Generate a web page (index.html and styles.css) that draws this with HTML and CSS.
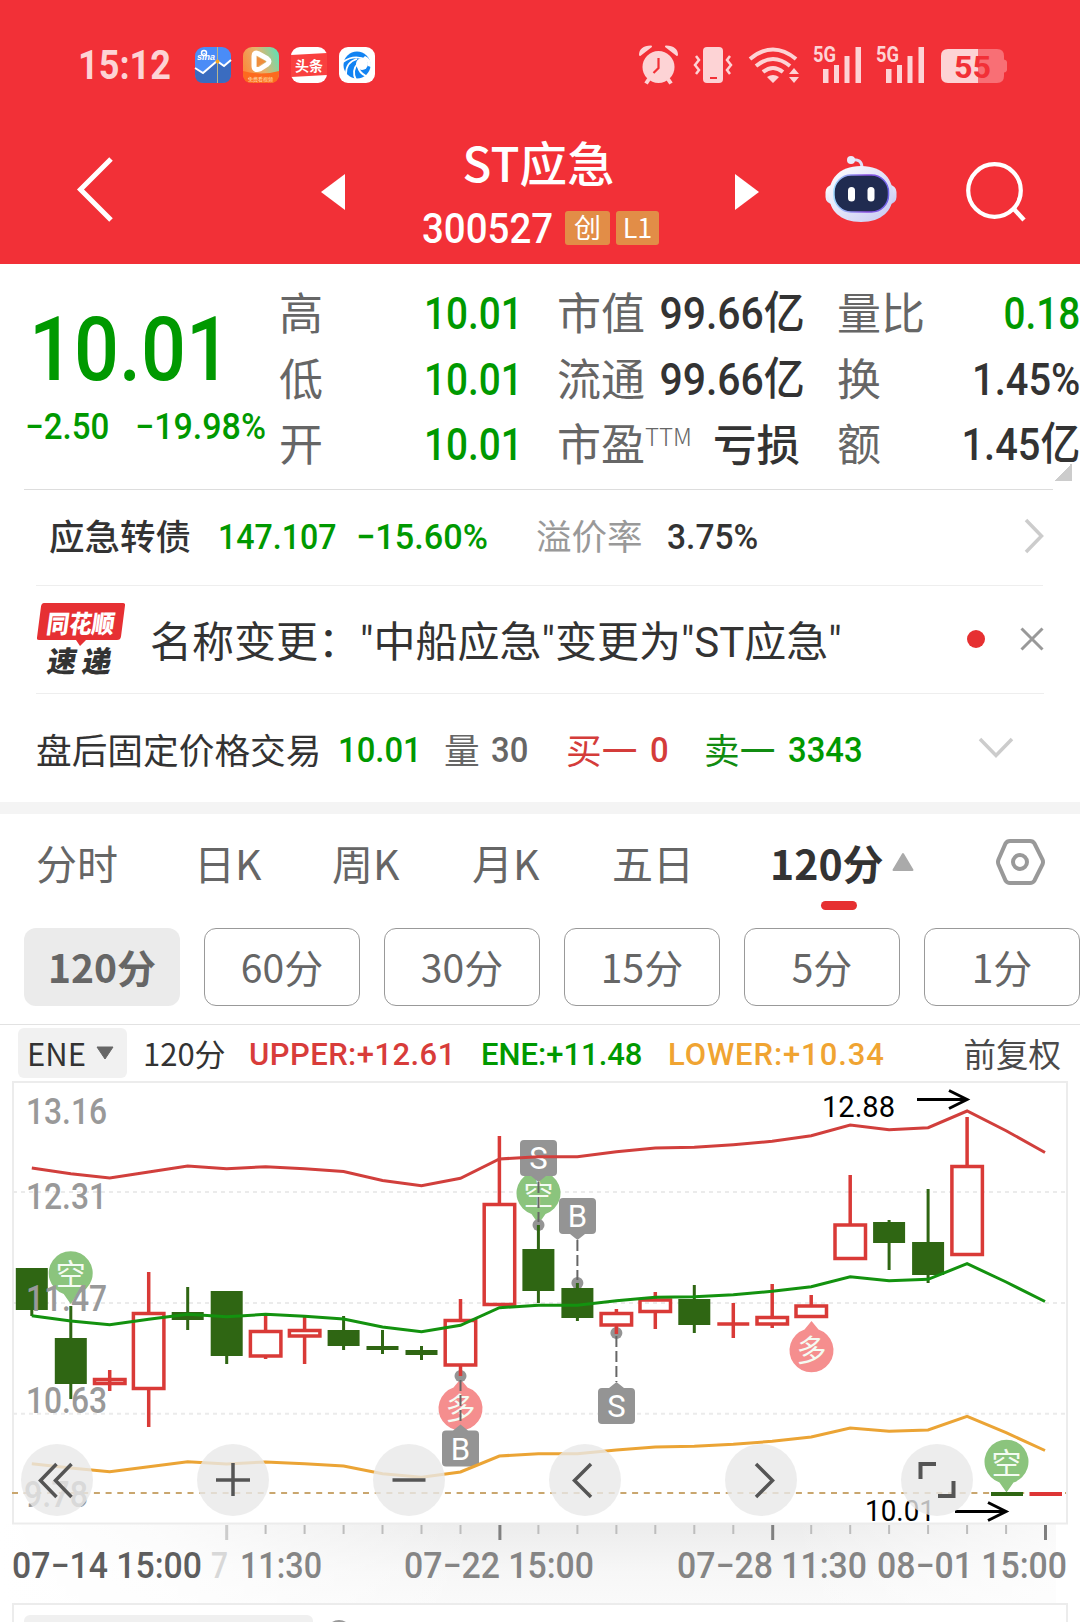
FILE: index.html
```html
<!DOCTYPE html>
<html lang="zh-CN">
<head>
    <meta charset="UTF-8">
    <meta name="viewport" content="width=device-width, initial-scale=1.0">
    <title>ST应急 300527</title>
    <link rel="stylesheet" href="styles.css">
</head>
<body>
    <header class="header">
        <div class="status-bar">
            <span class="clock">15:12</span>
            <div class="app-icons">
                <svg width="36" height="36" viewBox="0 0 36 36">
                    <rect width="36" height="36" rx="9" fill="#4a8cf7"/>
                    <path d="M0 21l8 5 14-12 7 5 7-6v14q0 9-9 9H9q-9 0-9-9z" fill="#3a6cc0"/>
                    <path d="M0 21l8 5 14-12 7 5 7-6" fill="none" stroke="#fff" stroke-width="2"/>
                    <path d="M22.500 0v36" stroke="#b9b58e" stroke-width="1"/>
                    <circle cx="22.500" cy="14.500" r="2" fill="#f5a623"/>
                    <circle cx="9" cy="6" r="2.500" fill="none" stroke="#fff" stroke-width="1.500"/>
                    <text x="2" y="13" class="sina">sina</text>
                </svg>
                <svg width="36" height="36" viewBox="0 0 36 36">
                    <defs>
                        <linearGradient id="video" x1="0" y1="0.600" x2="1" y2="0.200">
                            <stop offset="0" stop-color="#fb8a3c"/>
                            <stop offset="0.500" stop-color="#e6b26c"/>
                            <stop offset="1" stop-color="#62e0b4"/>
                        </linearGradient>
                    </defs>
                    <rect width="36" height="36" rx="9" fill="url(#video)"/>
                    <path d="M0 24q18 5 36 0v3q0 9-9 9H9q-9 0-9-9z" fill="#fd6a1f"/>
                    <path d="M11 9q0-4 4-2.500l9 5q4 3 0 6l-7 4.500q-6 2-6-3z" fill="none" stroke="#fff" stroke-width="5" stroke-linejoin="round"/>
                    <path d="M14 10l9 4.500-9 5z" fill="#f08d3c"/>
                    <text x="5" y="34" class="free">免费看视频</text>
                </svg>
                <svg width="36" height="36" viewBox="0 0 36 36">
                    <rect width="36" height="36" rx="9" fill="#fff"/>
                    <path d="M0 8l36-2v22L0 30z" fill="#f9403f"/>
                    <text x="4" y="24" class="toutiao">头条</text>
                </svg>
                <svg width="36" height="36" viewBox="0 0 36 36">
                    <rect width="36" height="36" rx="9" fill="#fff"/>
                    <circle cx="18" cy="18" r="13.500" fill="#1283f2"/>
                    <circle cx="23" cy="17" r="6" fill="#fff"/>
                    <path d="M4 15q11-8 24-2M7 27q0-12 11-15M17 33q-5-9 2-17M27 29q-7-3-8-10" fill="none" stroke="#fff" stroke-width="1.800"/>
                    <path d="M26 9q7 3 6 11l-3-1q0-6-5-8z" fill="#fff"/>
                </svg>
            </div>
            <svg class="status-icons" width="370" height="40" viewBox="638 45 370 40">
                <g fill="#fdd3d5">
                    <circle cx="658.500" cy="67" r="16"/>
                    <path d="M640 55q0-8 11-8.500zM677 55q0-8-11-8.500z" stroke="#fdd3d5" stroke-width="2" stroke-linejoin="round"/>
                    <path d="M649 79l-3 4.500M668 79l3 4.500" stroke="#fdd3d5" stroke-width="4"/>
                    <path d="M658.500 58v10l-5 5" fill="none" stroke="#f23037" stroke-width="2.200"/>
                    <rect x="703" y="47" width="20" height="36" rx="4"/>
                    <path d="M710 78h7" stroke="#f23037" stroke-width="2"/>
                    <path d="M696 56l3 4-4 5 4 5-3 4M730 56l-3 4 4 5-4 5 3 4" fill="none" stroke="#fdd3d5" stroke-width="2.500"/>
                    <path d="M750 59q23-19 46 0M756 66q17-14 34 0M763 72q10-8 20 0" fill="none" stroke="#fdd3d5" stroke-width="4"/>
                    <path d="M767 77q6-4 12 0l-6 6zM789 74l5-6 5 6zM789 77l5 6 5-6z"/>
                    <path d="M823 69h5.500v14H823zM834 65h5v18h-5zM844.500 56h5v27h-5zM855.500 47h5.500v36h-5.500z"/>
                    <path d="M886 69h5.500v14H886zM897 65h5v18h-5zM907.500 56h5v27h-5zM918.500 47h5.500v36h-5.500z"/>
                    <text x="813" y="62" class="net" textLength="23" lengthAdjust="spacingAndGlyphs">5G</text>
                    <text x="876" y="62" class="net" textLength="23" lengthAdjust="spacingAndGlyphs">5G</text>
                    <path d="M978 49h19q7 0 7 7v3.500q3 .5 3 3v7q0 2.500-3 3V76q0 7-7 7h-19z" fill="#f86f75"/>
                    <path d="M978 49h-30q-7 0-7 7v20q0 7 7 7h30z"/>
                    <text x="954" y="77.500" class="battery" textLength="37" lengthAdjust="spacingAndGlyphs">55</text>
                </g>
            </svg>
        </div>
        <div class="nav">
            <svg class="back" width="40" height="70" viewBox="75 155 40 70"><path d="M111 159L80.500 189.500L111 220" fill="none" stroke="#fff" stroke-width="5"/></svg>
            <svg class="prev" width="24" height="36" viewBox="0 0 24 36"><path d="M24 0v36L0 18z" fill="#fff"/></svg>
            <div class="title">
                <div class="stock-name">ST应急</div>
                <div class="stock-code"><span class="code num">300527</span><span class="tag">创</span><span class="tag tag-l1">L1</span></div>
            </div>
            <svg class="next" width="24" height="36" viewBox="0 0 24 36"><path d="M0 0v36l24-18z" fill="#fff"/></svg>
            <svg class="robot" width="74" height="68" viewBox="824 155 74 68">
                <defs>
                    <linearGradient id="shell" x1="0" y1="0" x2="1" y2="1">
                        <stop offset="0" stop-color="#fff"/>
                        <stop offset="1" stop-color="#c6c8f2"/>
                    </linearGradient>
                    <linearGradient id="rim" x1="0" y1="0" x2="1" y2="0">
                        <stop offset="0" stop-color="#9fd8ff"/>
                        <stop offset="0.600" stop-color="#8a4fe0"/>
                        <stop offset="1" stop-color="#6d63e8"/>
                    </linearGradient>
                </defs>
                <path d="M851 160q11-2 11 8" fill="none" stroke="#dfe0f8" stroke-width="3"/>
                <circle cx="851" cy="160" r="4" fill="#e9ebfb"/>
                <rect x="825.500" y="185" width="71" height="19" rx="7" fill="url(#shell)"/>
                <path d="M861 166c23 0 32 14 32 29s-11 27-32 27-32-12-32-27 9-29 32-29z" fill="url(#shell)"/>
                <rect x="834" y="175" width="54.500" height="37" rx="17" fill="#202b50" stroke="url(#rim)" stroke-width="1.500"/>
                <rect x="848" y="187" width="7" height="14.500" rx="3.500" fill="#fff"/>
                <rect x="867.500" y="187" width="7" height="14.500" rx="3.500" fill="#fff"/>
            </svg>
            <svg class="search" width="64" height="64" viewBox="963 159 64 64">
                <circle cx="994.500" cy="190.500" r="26.300" fill="none" stroke="#fff" stroke-width="4.200"/>
                <path d="M1013 208l11 12" stroke="#fff" stroke-width="4.500"/>
            </svg>
        </div>
    </header>

    <section class="quote">
        <div class="price-block">
            <div class="price num">10.01</div>
            <div class="change"><span class="num diff">−2.50</span><span class="num percent">−19.98%</span></div>
        </div>
        <div class="stats">
            <div class="stat"><span>高</span><b class="num digits high green">10.01</b></div>
            <div class="stat"><span>市值</span><b class="num">99.66亿</b></div>
            <div class="stat"><span>量比</span><b class="num digits green">0.18</b></div>

            <div class="stat"><span>低</span><b class="num digits high green">10.01</b></div>
            <div class="stat"><span>流通</span><b class="num">99.66亿</b></div>
            <div class="stat"><span>换</span><b class="num rate">1.45%</b></div>

            <div class="stat"><span>开</span><b class="num digits high green">10.01</b></div>
            <div class="stat"><span>市盈<sup>TTM</sup></span><b class="cn">亏损</b></div>
            <div class="stat"><span>额</span><b class="num rate">1.45亿</b></div>
        </div>
        <i class="corner"></i>
    </section>

    <section class="bond">
        <span class="bond-name">应急转债</span>
        <span class="bond-price num green">147.107</span>
        <span class="bond-change num green">−15.60%</span>
        <span class="bond-label">溢价率</span>
        <span class="bond-rate num">3.75%</span>
        <svg width="22" height="38" viewBox="0 0 22 38"><path d="M3 3l15.500 16L3 35" fill="none" stroke="#ccc" stroke-width="3.500"/></svg>
    </section>

    <section class="news">
        <svg class="news-logo" width="90" height="76" viewBox="36 601 90 76">
            <path d="M44 603h79q2.500 0 2 2.500l-4 31q-.5 3.500-4 3.500H86l-6 6-4-6H39q-2.500 0-2-2.500l4-31q.5-3.500 3-3.500z" fill="#e63033"/>
            <text x="0" y="0" transform="translate(45.500 633) skewX(-8)" class="logo-top" textLength="68" lengthAdjust="spacingAndGlyphs">同花顺</text>
            <text x="0" y="0" transform="translate(46 672) skewX(-10)" class="logo-bottom" textLength="64">速递</text>
        </svg>
        <span class="news-text">名称变更：&quot;中船应急&quot;变更为&quot;ST应急&quot;</span>
        <i class="dot"></i>
        <svg class="close" width="24" height="24" viewBox="0 0 24 24"><path d="M1.500 1.500l21 21M22.500 1.500l-21 21" stroke="#999" stroke-width="3"/></svg>
    </section>

    <section class="after-hours">
        <span class="ah-name">盘后固定价格交易</span>
        <span class="ah-price num green">10.01</span>
        <span class="ah-vol">量</span>
        <span class="ah-vol-n num">30</span>
        <span class="ah-buy">买一</span>
        <span class="ah-buy-n num">0</span>
        <span class="ah-sell">卖一</span>
        <span class="ah-sell-n num">3343</span>
        <svg width="36" height="22" viewBox="0 0 36 22"><path d="M2 2l16 16.500L34 2" fill="none" stroke="#ccc" stroke-width="3.500"/></svg>
    </section>

    <nav class="tabs">
        <span class="tab">分时</span>
        <span class="tab">日K</span>
        <span class="tab">周K</span>
        <span class="tab">月K</span>
        <span class="tab">五日</span>
        <span class="tab active">120分<svg width="24" height="20" viewBox="0 0 24 20"><path d="M12 2l9.500 16h-19z" fill="#aaa" stroke="#aaa" stroke-width="2" stroke-linejoin="round"/></svg></span>
        <svg class="settings" width="50" height="48" viewBox="995 838 50 48">
            <path d="M1010 841h20q3 0 4.500 2.500l8 16q1 2.500 0 5l-8 16q-1.500 2.500-4.500 2.500h-20q-3 0-4.500-2.500l-7-16q-1-2.500 0-5l7-16q1.500-2.500 4.500-2.500z" fill="none" stroke="#999" stroke-width="4"/>
            <circle cx="1020" cy="862" r="7" fill="none" stroke="#999" stroke-width="4"/>
        </svg>
    </nav>

    <div class="periods">
        <button class="period selected">120分</button>
        <button class="period">60分</button>
        <button class="period">30分</button>
        <button class="period">15分</button>
        <button class="period">5分</button>
        <button class="period">1分</button>
    </div>

    <div class="indicator">
        <span class="picker">ENE<svg width="20" height="14" viewBox="0 0 20 14"><path d="M2 1h16l-8 12z" fill="#666" stroke="#666" stroke-linejoin="round"/></svg></span>
        <span class="ind-period">120分</span>
        <span class="ind-upper">UPPER:+12.61</span>
        <span class="ind-ene">ENE:+11.48</span>
        <span class="ind-lower">LOWER:+10.34</span>
        <span class="adjust">前复权</span>
    </div>

    <svg class="chart" width="1080" height="542" viewBox="0 1080 1080 542">
        <defs>
            <linearGradient id="axis-y" x1="0" y1="0" x2="0" y2="1">
                <stop offset="0" stop-color="#ececec"/>
                <stop offset="0.600" stop-color="#f7f7f7"/>
                <stop offset="1" stop-color="#fafafa"/>
            </linearGradient>
            <linearGradient id="axis-x" x1="0" y1="0" x2="1" y2="0">
                <stop offset="0" stop-color="#fff"/>
                <stop offset="0.150" stop-color="#fff" stop-opacity="0.800"/>
                <stop offset="0.450" stop-color="#fff" stop-opacity="0"/>
                <stop offset="0.750" stop-color="#fff" stop-opacity="0"/>
                <stop offset="1" stop-color="#fff" stop-opacity="0.700"/>
            </linearGradient>
            <g id="kong">
                <path d="M0 30L-7 20A22 22 0 1 1 7 20Z" fill="#8bc47d"/>
                <text y="11" class="pin-text">空</text>
            </g>
            <g id="duo">
                <path d="M0-29L7-20.500A22 22 0 1 1-7-20.500Z" fill="#f58e8e"/>
                <text y="11" class="pin-text">多</text>
            </g>
        </defs>

        <!-- frame and grid -->
        <rect x="0" y="1524" width="1056" height="80" fill="url(#axis-y)"/>
        <rect x="0" y="1524" width="1056" height="80" fill="url(#axis-x)"/>
        <rect x="13" y="1082" width="1054" height="441.500" fill="#fff" stroke="#ececec" stroke-width="2"/>
        <path d="M13 1192H1066M13 1303H1066M13 1413.700H1066" stroke="#ebebeb" stroke-width="2" stroke-dasharray="4 4"/>
        <path d="M12 1493H1066" stroke="#c9a66e" stroke-width="2" stroke-dasharray="6 5.700"/>

        <!-- signal pins -->
        <use href="#kong" x="70.700" y="1274"/>
        <use href="#kong" x="538.500" y="1194"/>
        <use href="#kong" x="1006.500" y="1462.500"/>
        <use href="#duo" x="460.500" y="1408"/>
        <use href="#duo" x="811.500" y="1350"/>

        <!-- buy / sell flags -->
        <g fill="#949494">
            <circle cx="538.500" cy="1225" r="6"/>
            <circle cx="577.400" cy="1283" r="6"/>
            <circle cx="616.400" cy="1333" r="6"/>
            <circle cx="460.500" cy="1376" r="6"/>
            <path d="M524 1140h29q4 0 4 4v28q0 4-4 4h-7l-7.500 6-7.500-6h-7q-4 0-4-4v-28q0-4 4-4z"/>
            <path d="M563 1198h29q4 0 4 4v28q0 4-4 4h-7l-7.500 6-7.500-6h-7q-4 0-4-4v-28q0-4 4-4z"/>
            <path d="M602 1424h29q4 0 4-4v-28q0-4-4-4h-7l-7.500-6-7.500 6h-7q-4 0-4 4v28q0 4 4 4z"/>
            <path d="M446 1466.500h29q4 0 4-4v-28q0-4-4-4h-7l-7.500-6-7.500 6h-7q-4 0-4 4v28q0 4 4 4z"/>
        </g>
        <path d="M538.500 1182V1222M577.400 1240V1280M616.400 1336V1382M460.500 1380V1425" stroke="#666" stroke-width="2" stroke-dasharray="11 4"/>
        <text x="538.500" y="1169" class="flag">S</text>
        <text x="577.400" y="1227" class="flag">B</text>
        <text x="616.400" y="1417" class="flag">S</text>
        <text x="460.500" y="1460" class="flag">B</text>

        <!-- falling candles -->
        <path class="down-wick" d="M31.800 1268V1316M70.800 1306V1399M187.700 1287V1330M226.700 1291V1364M343.600 1316V1350M382.500 1330V1354M421.500 1346V1360M538.400 1225V1303M577.400 1283V1321M694.300 1285V1333M889.100 1220V1270M928.100 1189V1283"/>
        <path class="down-body" d="M15.800 1268h32v42h-32zM54.800 1338h32v46h-32zM171.700 1312h32v8h-32zM210.700 1291h32v65h-32zM327.600 1330h32v16h-32zM366.500 1346h32v4h-32zM405.500 1350h32v5h-32zM522.400 1249h32v42h-32zM561.400 1288h32v30h-32zM678.300 1299h32v26h-32zM873.100 1222h32v21h-32zM912.100 1242h32v33h-32zM991 1492h32v4h-32z"/>

        <!-- rising candles -->
        <path class="up" d="M109.700 1370V1391M148.700 1272V1314M148.700 1388V1427M265.600 1315V1332M265.600 1356V1359M304.600 1317V1330M304.600 1336V1364M460.500 1299V1320M460.500 1366V1376M499.400 1136V1204M616.400 1309V1313M616.400 1326V1334M655.300 1292V1299M655.300 1312V1329M733.300 1303V1338M717.300 1324H749.300M772.200 1284V1317M772.200 1325V1328M811.200 1295V1305M850.200 1175V1224M967.100 1117V1166"/>
        <path class="up" d="M94.500 1379.500h30.500v4h-30.500zM133.400 1313.500h30.500v75h-30.500zM250.400 1331.500h30.500v24.500h-30.500zM289.400 1330.500h30.500v5.500h-30.500zM445.200 1320.500h30.500v44.500h-30.500zM484.200 1204.500h30.500v100h-30.500zM601.100 1313.500h30.500v11.500h-30.500zM640 1300h30.500v11.500h-30.500zM757 1317.500h30.500v6.500h-30.500zM796 1306h30.500v10.500h-30.500zM835 1225h30.500v33.500h-30.500zM951.900 1166.500h30.500v88h-30.500z"/>
        <path d="M1029.500 1494h32.500" stroke="#dd3535" stroke-width="4"/>

        <!-- ENE bands -->
        <polyline class="band" stroke="#d13f3c" points="31.800,1168 70.800,1173.700 109.700,1178 148.700,1172 187.700,1166 226.700,1168.700 265.600,1166.700 304.600,1168.700 343.600,1171.500 382.500,1180.500 421.500,1185.700 460.500,1178.300 499.400,1159 538.400,1156.700 577.400,1156.700 616.400,1151.700 655.300,1148 694.300,1147.300 733.300,1144.700 772.200,1141.300 811.200,1135.700 850.200,1125 889.100,1129.700 928.100,1127.700 967.100,1111 1006.100,1130.700 1045,1152.500"/>
        <polyline class="band" stroke="#13920f" points="31.800,1315.700 70.800,1321 109.700,1324.700 148.700,1319.300 187.700,1314.300 226.700,1316.700 265.600,1314.300 304.600,1316.300 343.600,1319 382.500,1327 421.500,1331.700 460.500,1325.300 499.400,1307.700 538.400,1305.300 577.400,1305.300 616.400,1300.700 655.300,1297.300 694.300,1296.700 733.300,1294.700 772.200,1291.300 811.200,1286.700 850.200,1276.700 889.100,1280.700 928.100,1279.300 967.100,1263.700 1006.100,1282 1045,1301.500"/>
        <polyline class="band" stroke="#eba435" points="31.800,1463.700 70.800,1468 109.700,1471.700 148.700,1466.700 187.700,1461.700 226.700,1464 265.600,1462 304.600,1463.700 343.600,1466 382.500,1473.700 421.500,1477.300 460.500,1472 499.400,1456 538.400,1453.700 577.400,1453.700 616.400,1450 655.300,1447 694.300,1446.300 733.300,1444.300 772.200,1441.300 811.200,1437 850.200,1428 889.100,1431.300 928.100,1430 967.100,1416.300 1006.100,1432.700 1045,1450.500"/>

        <!-- price scale -->
        <g class="scale">
            <text x="26" y="1124" textLength="81" lengthAdjust="spacingAndGlyphs">13.16</text>
            <text x="26" y="1209" textLength="81" lengthAdjust="spacingAndGlyphs">12.31</text>
            <text x="26" y="1311" textLength="81" lengthAdjust="spacingAndGlyphs">11.47</text>
            <text x="26" y="1413" textLength="81" lengthAdjust="spacingAndGlyphs">10.63</text>
            <text x="24" y="1507" textLength="64" lengthAdjust="spacingAndGlyphs">9.78</text>
        </g>
        <g class="extreme">
            <text x="822" y="1117" textLength="73" lengthAdjust="spacingAndGlyphs">12.88</text>
            <text x="865" y="1521" textLength="70" lengthAdjust="spacingAndGlyphs">10.01</text>
            <path d="M917 1099.500H966M949 1090.500l18 9-18 9M955 1511.500H1005M988 1502.500l18 9-18 9"/>
        </g>

        <!-- round controls -->
        <g fill="#e8e8e8" fill-opacity="0.800">
            <circle cx="57" cy="1480" r="36"/>
            <circle cx="233" cy="1480" r="36"/>
            <circle cx="409" cy="1480" r="36"/>
            <circle cx="585" cy="1480" r="36"/>
            <circle cx="761" cy="1480" r="36"/>
            <circle cx="937" cy="1480" r="36"/>
        </g>
        <path class="control" d="M56.500 1464L40.500 1480.500l16 16.500M71.500 1464L55.500 1480.500l16 16.500M216 1480h34M233 1463v33M392.500 1480h33M591 1464l-16.500 16.500L591 1497M756 1464l16.500 16.500L756 1497"/>
        <path class="control thick" d="M920.500 1479v-15H936M953.500 1481v15H938"/>

        <!-- time axis -->
        <path d="M265.600 1525v9M304.600 1525v9M343.600 1525v9M382.500 1525v9M421.500 1525v9M460.500 1525v9M538.400 1525v9M577.400 1525v9M616.400 1525v9M655.300 1525v9M694.300 1525v9M733.300 1525v9M811.200 1525v9M850.200 1525v9M889.100 1525v9M928.100 1525v9M967.100 1525v9M1006.100 1525v9" stroke="#bdbdbd" stroke-width="2"/>
        <path d="M226.700 1525v15" stroke="#ccc" stroke-width="3"/>
        <path d="M499.900 1525v15M772.700 1525v15M1045.500 1525v15" stroke="#808080" stroke-width="3"/>
        <g class="dates">
            <text x="12" y="1578" fill="#5e5e5e" textLength="190" lengthAdjust="spacingAndGlyphs">07−14 15:00</text>
            <text x="211" y="1578" fill="#d8d8d8" textLength="17" lengthAdjust="spacingAndGlyphs">7</text>
            <text x="240" y="1578" textLength="82" lengthAdjust="spacingAndGlyphs">11:30</text>
            <text x="404" y="1578" textLength="190" lengthAdjust="spacingAndGlyphs">07−22 15:00</text>
            <text x="677" y="1578" textLength="190" lengthAdjust="spacingAndGlyphs">07−28 11:30</text>
            <text x="877" y="1578" textLength="190" lengthAdjust="spacingAndGlyphs">08−01 15:00</text>
        </g>

        <!-- next panel -->
        <path d="M13 1622V1604H1067V1622" fill="#fff" stroke="#ececec" stroke-width="2"/>
        <rect x="24" y="1615" width="289" height="20" rx="6" fill="#f0f0f0"/>
        <circle cx="339" cy="1633" r="12" fill="none" stroke="#999" stroke-width="2"/>
    </svg>
</body>
</html>
```
FILE: styles.css
```css
* {
    margin: 0;
    padding: 0;
    box-sizing: border-box;
}

body {
    width: 1080px;
    height: 1622px;
    overflow: hidden;
    background: #fff;
    color: #333;
    font-family: 'Noto Sans CJK SC', 'Noto Sans', sans-serif;
    white-space: nowrap;
}

svg {
    display: block;
    flex: none;
    overflow: visible;
}

/* condensed digits */
.num {
    display: inline-block;
    font-family: Roboto, 'Noto Sans CJK SC', sans-serif;
    font-weight: 500;
    transform: scaleX(0.92);
    transform-origin: left;
}

.green {
    color: #009900;
}

/* header */
.header {
    height: 264px;
    background: #f23037;
    color: #fff;
}

.status-bar {
    display: flex;
    align-items: center;
    height: 130px;
    padding-left: 78px;
}

.clock {
    width: 117px;
    color: #fdd3d5;
    font: bold 41px Roboto, sans-serif;
    transform: scaleX(0.88);
    transform-origin: left;
}

.app-icons {
    display: flex;
    gap: 12px;
}

.sina {
    font: italic bold 9px 'Liberation Sans', sans-serif;
    fill: #fff;
}

.free {
    font: 5px 'Noto Sans CJK SC', sans-serif;
    fill: #ffe0b0;
}

.toutiao {
    font: bold 14px 'Noto Sans CJK SC', sans-serif;
    fill: #fff;
}

.status-icons {
    margin-left: 263px;
}

.net {
    font: bold 22px Roboto, sans-serif;
}

.battery {
    font: bold 32px Roboto, sans-serif;
    fill: #f23037;
}

.nav {
    display: flex;
    align-items: flex-start;
    height: 134px;
    padding-left: 75px;
}

.back {
    margin-top: 25px;
}

.prev {
    margin: 44px 0 0 206px;
}

.title {
    width: 390px;
    text-align: center;
}

.stock-name {
    height: 70px;
    padding-right: 3px;
    font-size: 47.5px;
    line-height: 63px;
    font-weight: 500;
}

.stock-code {
    display: flex;
    align-items: center;
    height: 56px;
    padding-left: 77px;
}

.code {
    width: 143px;
    font-size: 43px;
    text-align: left;
    transform: scaleX(0.895);
}

.tag {
    width: 45px;
    height: 34px;
    border-radius: 3px;
    background: #e28d47;
    font-size: 27px;
    line-height: 32px;
    text-align: center;
}

.tag-l1 {
    width: 43px;
    margin-left: 6px;
}

.next {
    margin-top: 44px;
}

.robot {
    margin: 25px 0 0 65px;
}

.search {
    margin: 29px 0 0 65px;
}

/* quote */
.quote {
    position: relative;
    display: flex;
    height: 226px;
    padding-top: 16px;
}

.quote::after {
    content: '';
    position: absolute;
    left: 24px;
    right: 27px;
    bottom: 0;
    border-bottom: 1px solid #ddd;
}

.price-block {
    width: 279px;
    color: #009900;
}

.price {
    display: block;
    height: 128px;
    margin-left: 29px;
    font-size: 89px;
    line-height: 139px;
    transform: scaleX(0.89);
}

.change {
    display: flex;
    padding-left: 25px;
    font-size: 36px;
    line-height: 38px;
}

.diff {
    width: 110px;
}

.percent {
    transform: scaleX(0.945);
}

.stats {
    display: grid;
    grid-template-columns: 241px 243px 243px;
    grid-auto-rows: 65.5px;
    column-gap: 37px;
}

.stat {
    display: flex;
    justify-content: space-between;
    color: #666;
    font-size: 44px;
    line-height: 63px;
}

.stat sup {
    font-size: 24px;
    font-weight: 300;
    line-height: 1;
    vertical-align: 15px;
}

.stat b {
    color: #333;
    font-size: 45px;
    line-height: 67px;
    font-weight: 500;
    transform-origin: right;
}

.stat b.num {
    transform: scaleX(0.91);
}

.stat b.digits {
    transform: scaleX(0.86);
}

.stat b.high {
    margin-right: -3px;
}

.stat b.rate {
    transform: scaleX(0.885);
}

.stat b.green {
    color: #009900;
}

.stat b.cn {
    font-size: 43.5px;
    line-height: 63px;
}

.corner {
    position: absolute;
    right: 8px;
    bottom: 9px;
    width: 18px;
    height: 18px;
    background: linear-gradient(135deg, transparent 50%, #ccc 50%);
}

/* convertible bond */
.bond {
    display: flex;
    align-items: center;
    height: 96px;
    margin: 0 37px 0 36px;
    padding: 0 0 2px 13px;
    border-bottom: 1px solid #eee;
    font-size: 35.5px;
}

.bond svg {
    margin: 0 -2px 2px 0;
}

.bond-name,
.bond-label {
    padding-bottom: 5px;
}

.bond-name {
    width: 169px;
    font-weight: 500;
}

.bond-price {
    width: 138px;
    transform: scaleX(0.905);
}

.bond-change {
    width: 180px;
    transform: scaleX(0.965);
}

.bond-label {
    width: 131px;
    color: #999;
}

.bond-rate {
    flex: 1;
    transform: scaleX(0.945);
}

/* news line */
.news {
    display: flex;
    align-items: center;
    height: 108px;
    margin: 0 36px;
    padding-bottom: 2px;
    border-bottom: 1px solid #eee;
}

.logo-top {
    font: 900 25px 'Noto Sans CJK SC', sans-serif;
    fill: #fff;
}

.logo-bottom {
    font: 900 29px 'Noto Sans CJK SC', sans-serif;
    fill: #333;
}

.news-text {
    width: 841px;
    padding-left: 24px;
    font-family: Roboto, 'Noto Sans CJK SC', sans-serif;
    font-size: 42px;
}

.dot {
    flex: none;
    width: 18px;
    height: 18px;
    margin-right: 35px;
    border-radius: 50%;
    background: #e63031;
}

/* after-hours trading */
.after-hours {
    display: flex;
    align-items: center;
    height: 120px;
    padding: 0 66px 0 36px;
    border-bottom: 12px solid #f4f4f4;
    font-size: 35.7px;
}

.after-hours .num {
    padding-top: 4px;
}

.ah-name {
    width: 302px;
}

.ah-price {
    width: 106px;
}

.ah-vol {
    width: 47px;
    color: #666;
}

.ah-vol-n {
    width: 75px;
    color: #666;
}

.ah-buy,
.ah-buy-n {
    width: 84px;
    color: #d43c3a;
}

.ah-buy-n {
    width: 54px;
}

.ah-sell,
.ah-sell-n {
    width: 84px;
    color: #118c11;
}

.ah-sell-n {
    flex: 1;
    color: #009900;
}

/* chart tabs */
.tabs {
    display: flex;
    align-items: center;
    height: 98px;
    padding: 0 35px 3px 36px;
    color: #666;
    font-size: 41px;
}

.tab {
    width: 158px;
}

.tab:nth-child(2) {
    width: 138px;
}

.tab:nth-child(3) {
    width: 140px;
}

.tab:nth-child(4) {
    width: 140px;
}

.tab.active {
    position: relative;
    display: flex;
    align-items: center;
    gap: 7px;
    flex: 1;
    color: #333;
    font-weight: bold;
}

.tab.active::after {
    content: '';
    position: absolute;
    left: 51px;
    bottom: -18px;
    width: 36px;
    height: 9px;
    border-radius: 5px;
    background: #e63031;
}

.periods {
    display: flex;
    gap: 24px;
    height: 113px;
    padding: 16px 0 0 24px;
    border-bottom: 1px solid #e2e2e2;
}

.period {
    flex: none;
    width: 156px;
    height: 78px;
    padding-bottom: 3px;
    border: 1px solid #999;
    border-radius: 12px;
    background: #fff;
    color: #666;
    font: 39px 'Noto Sans CJK SC', sans-serif;
    line-height: 72px;
}

.period.selected {
    border: none;
    background: #ebebeb;
    font-weight: bold;
}

/* indicator line */
.indicator {
    display: flex;
    align-items: center;
    height: 55px;
    padding: 0 19px 0 18px;
    font-size: 31px;
}

.picker {
    display: flex;
    align-items: center;
    gap: 9px;
    width: 109px;
    height: 50px;
    margin-right: 16px;
    padding-left: 9px;
    border-radius: 6px;
    background: #f1f1f1;
}

.ind-period {
    width: 106px;
}

.ind-upper {
    width: 232px;
    color: #d83c3a;
    letter-spacing: 0.45px;
}

.ind-ene {
    width: 187px;
    color: #009900;
}

.ind-lower {
    flex: 1;
    color: #f0a432;
    letter-spacing: 0.9px;
}

.ind-upper,
.ind-ene,
.ind-lower {
    padding-top: 4px;
    font-family: Roboto, sans-serif;
    font-weight: 500;
}

.adjust {
    color: #4a4a4a;
    font-size: 32.5px;
}

/* chart */
.chart text {
    font-family: Roboto, sans-serif;
}

.down-wick {
    fill: none;
    stroke: #2f6613;
    stroke-width: 3;
}

.down-body {
    fill: #2f6613;
}

.up {
    fill: none;
    stroke: #d93a37;
    stroke-width: 3.5;
}

.band {
    fill: none;
    stroke-width: 3;
}

.scale text {
    fill: #999;
    font-size: 36px;
    font-weight: 500;
}

.extreme text {
    font-size: 30px;
}

.extreme path {
    fill: none;
    stroke: #000;
    stroke-width: 3;
}

.chart .pin-text {
    fill: #f4fbf2;
    font: 30px 'Noto Sans CJK SC', sans-serif;
    text-anchor: middle;
}

.chart .flag {
    fill: #fff;
    font-size: 31px;
    text-anchor: middle;
}

.control {
    fill: none;
    stroke: #555;
    stroke-width: 3.5;
}

.control.thick {
    stroke-width: 4;
}

.dates {
    fill: #858585;
}

.dates text {
    font-size: 36px;
    font-weight: 500;
}
```
